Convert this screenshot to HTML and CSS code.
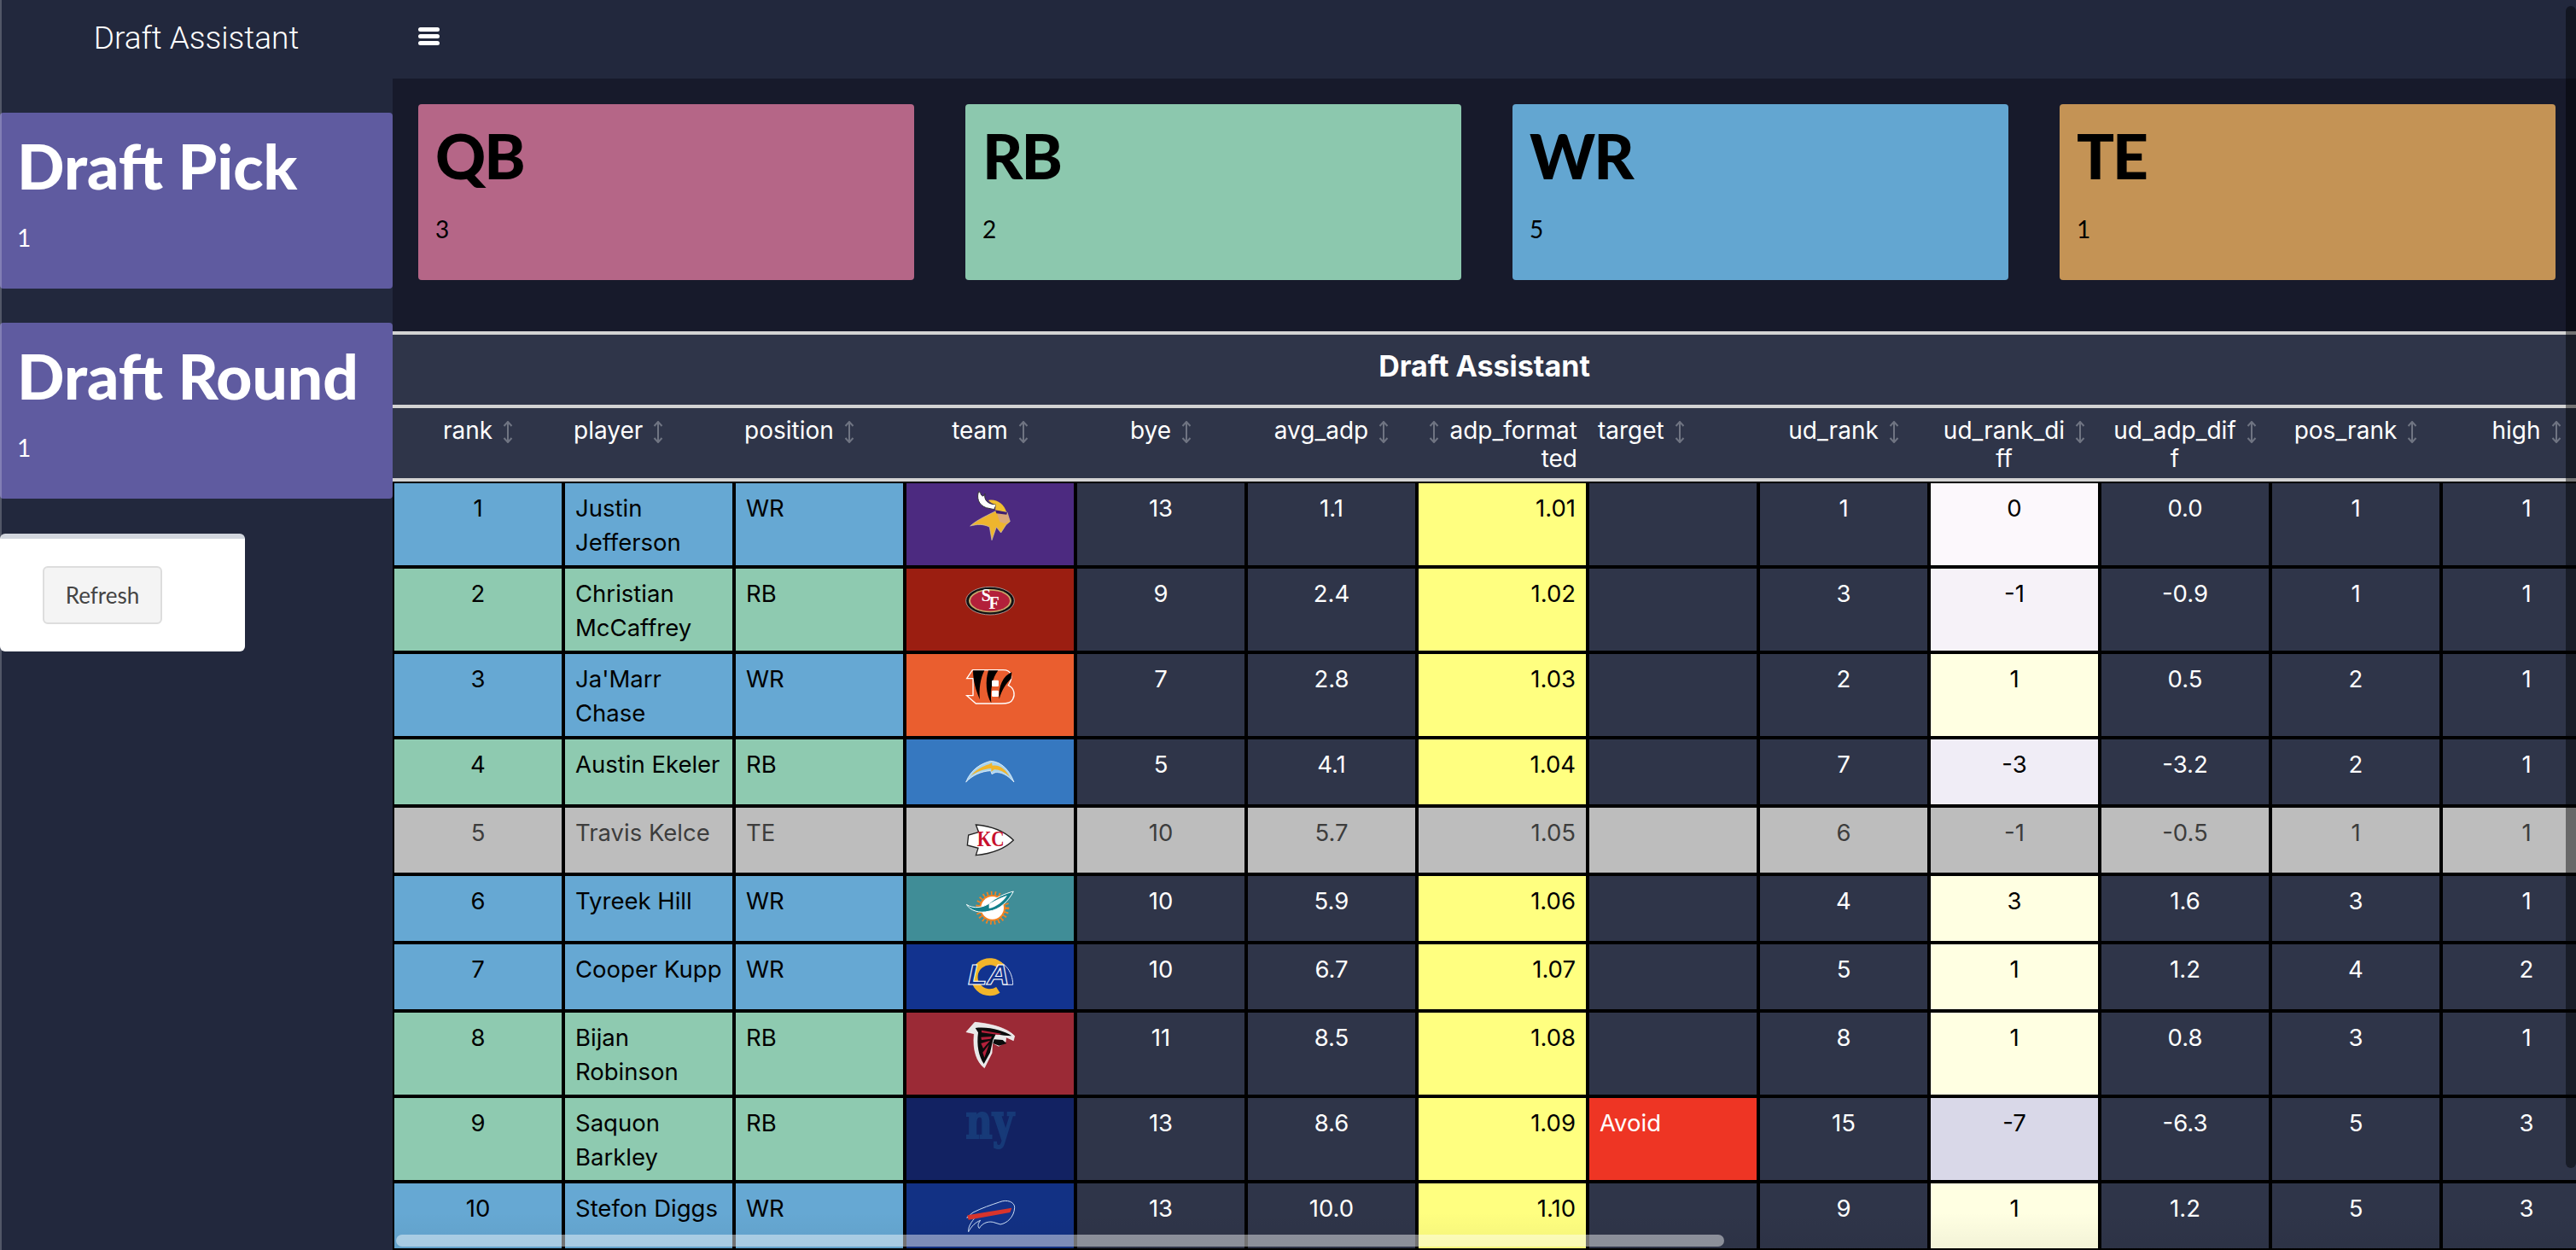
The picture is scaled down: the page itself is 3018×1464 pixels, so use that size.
FILE: index.html
```html
<!DOCTYPE html>
<html lang="en">
<head>
  <meta charset="UTF-8" />
  <title>Draft Assistant</title>
  <link rel="stylesheet" href="styles.css">
</head>
<body>
  <svg class="defs" width="0" height="0">
    <symbol id="sort" viewBox="0 0 12 26">
      <path d="M6 1V25M1.5 6L6 1L10.5 6M1.5 20L6 25L10.5 20" fill="none" stroke="#6f7482" stroke-width="2" />
    </symbol>
  </svg>

  <div class="app">
    <!-- Top bar -->
    <div class="logo">Draft Assistant</div>
    <div class="topbar">
      <div class="burger"><span></span><span></span><span></span></div>
    </div>

    <!-- Sidebar -->
    <aside class="sidebar">
      <div class="value-box pick">
        <h3>Draft Pick</h3>
        <p>1</p>
      </div>
      <div class="value-box round">
        <h3>Draft Round</h3>
        <p>1</p>
      </div>
      <div class="refresh-box">
        <button type="button">Refresh</button>
      </div>
    </aside>

    <main class="content">
      <div class="position-row">
        <div class="value-box dark qb"><h3>QB</h3><p>3</p></div>
        <div class="value-box dark rb"><h3>RB</h3><p>2</p></div>
        <div class="value-box dark wr"><h3>WR</h3><p>5</p></div>
        <div class="value-box dark te"><h3>TE</h3><p>1</p></div>
      </div>

      <div class="table-title">Draft Assistant</div>

      <table class="draft-table">
        <thead>
          <tr>
            <th><div class="th-in center"><span>rank</span><svg class="sort"><use href="#sort" /></svg></div></th>
            <th><div class="th-in"><span>player</span><svg class="sort"><use href="#sort" /></svg></div></th>
            <th><div class="th-in"><span>position</span><svg class="sort"><use href="#sort" /></svg></div></th>
            <th><div class="th-in center"><span>team</span><svg class="sort"><use href="#sort" /></svg></div></th>
            <th><div class="th-in center"><span>bye</span><svg class="sort"><use href="#sort" /></svg></div></th>
            <th><div class="th-in center"><span>avg_adp</span><svg class="sort"><use href="#sort" /></svg></div></th>
            <th><div class="th-in right"><svg class="sort"><use href="#sort" /></svg><span>adp_format<br>ted</span></div></th>
            <th><div class="th-in"><span>target</span><svg class="sort"><use href="#sort" /></svg></div></th>
            <th><div class="th-in center"><span>ud_rank</span><svg class="sort"><use href="#sort" /></svg></div></th>
            <th><div class="th-in center"><span class="mid">ud_rank_di<br>ff</span><svg class="sort"><use href="#sort" /></svg></div></th>
            <th><div class="th-in center"><span class="mid">ud_adp_dif<br>f</span><svg class="sort"><use href="#sort" /></svg></div></th>
            <th><div class="th-in center"><span>pos_rank</span><svg class="sort"><use href="#sort" /></svg></div></th>
            <th><div class="th-in center"><span>high</span><svg class="sort"><use href="#sort" /></svg></div></th>
          </tr>
        </thead>
        <tbody>
          <tr class="wr-row">
            <td class="mid pos">1</td><td class="pos name">Justin<br>Jefferson</td><td class="pos">WR</td>
            <td class="logo-cell min">
              <svg class="team-logo" viewBox="0 0 180 180">
                <path d="M50 4C42 26 48 52 76 62L104 68L112 50C88 52 66 38 72 12C68 24 60 24 56 10Z" fill="#fff" stroke="#333" stroke-width="3" />
                <path d="M84 36C110 30 138 46 148 78L108 72L110 50C100 50 90 44 84 36Z" fill="#f0bf30" />
                <path d="M20 126C50 100 84 88 112 72L150 78L160 110L146 122L128 150L112 130L96 176L88 130C66 118 44 120 20 126Z" fill="#eeb52e" stroke="#cfc7b8" stroke-width="2" />
                <path d="M112 76L150 80L158 108L142 118L124 112Z" fill="#dba878" />
                <path d="M108 70L150 78L148 86L112 82Z" fill="#3d1f6e" />
              </svg>
            </td>
            <td class="mid">13</td><td class="mid">1.1</td><td class="fmt">1.01</td><td></td><td class="mid">1</td>
            <td class="mid d-zero">0</td><td class="mid">0.0</td><td class="mid">1</td><td class="mid">1</td>
          </tr>
          <tr class="rb-row">
            <td class="mid pos">2</td><td class="pos name">Christian<br>McCaffrey</td><td class="pos">RB</td>
            <td class="logo-cell sf">
              <svg class="team-logo" viewBox="0 0 180 180">
                <ellipse cx="90" cy="89" rx="85" ry="49" fill="#111" stroke="#ccc" stroke-width="2" />
                <ellipse cx="90" cy="89" rx="75" ry="41" fill="#c9a96a" />
                <ellipse cx="90" cy="89" rx="69" ry="36" fill="#b3203a" />
                <text class="logo-serif" x="76" y="90" font-size="60" text-anchor="middle">S</text>
                <text class="logo-serif" x="104" y="118" font-size="60" text-anchor="middle">F</text>
              </svg>
            </td>
            <td class="mid">9</td><td class="mid">2.4</td><td class="fmt">1.02</td><td></td><td class="mid">3</td>
            <td class="mid d-m1">-1</td><td class="mid">-0.9</td><td class="mid">1</td><td class="mid">1</td>
          </tr>
          <tr class="wr-row">
            <td class="mid pos">3</td><td class="pos name">Ja'Marr<br>Chase</td><td class="pos">WR</td>
            <td class="logo-cell cin">
              <svg class="team-logo" viewBox="0 0 180 180">
                <path d="M28 32H136C166 32 172 58 154 86C176 96 178 120 170 134C164 148 150 150 130 150H40L8 122H30V62H8Z" fill="#ea5e2f" stroke="#fff" stroke-width="4" />
                <path d="M30 34H70C56 60 50 100 54 136C40 104 30 70 30 34Z" fill="#000" />
                <path d="M84 34H118C98 60 90 100 94 148C76 120 72 70 84 34Z" fill="#000" />
                <path d="M166 40C136 52 118 90 122 134C132 98 148 78 164 62Z" fill="#000" />
                <rect x="96" y="68" width="24" height="22" rx="4" fill="#fff" />
                <rect x="96" y="104" width="24" height="22" rx="4" fill="#fff" />
              </svg>
            </td>
            <td class="mid">7</td><td class="mid">2.8</td><td class="fmt">1.03</td><td></td><td class="mid">2</td>
            <td class="mid d-pos">1</td><td class="mid">0.5</td><td class="mid">2</td><td class="mid">1</td>
          </tr>
          <tr class="rb-row">
            <td class="mid pos">4</td><td class="pos name">Austin Ekeler</td><td class="pos">RB</td>
            <td class="logo-cell lac">
              <svg class="team-logo" viewBox="0 0 180 180">
                <path d="M5 126C22 82 58 60 92 52C132 54 160 88 174 126C150 100 128 90 108 92L96 98L92 86C58 88 28 102 5 126Z" fill="#a8d4f0" stroke="#fff" stroke-width="2" />
                <path d="M22 104C40 82 64 70 86 64L96 58L98 68C126 64 146 84 158 106C138 88 118 80 104 82L94 90V78C66 80 42 90 22 104Z" fill="#f2b52a" />
              </svg>
            </td>
            <td class="mid">5</td><td class="mid">4.1</td><td class="fmt">1.04</td><td></td><td class="mid">7</td>
            <td class="mid d-m3">-3</td><td class="mid">-3.2</td><td class="mid">2</td><td class="mid">1</td>
          </tr>
          <tr class="out-row">
            <td class="mid">5</td><td class="name">Travis Kelce</td><td>TE</td>
            <td class="logo-cell">
              <svg class="team-logo" viewBox="0 0 180 180">
                <path d="M40 36C90 40 140 58 172 90C140 122 90 138 40 143L48 118L10 108L14 72L50 62Z" fill="#fff" stroke="#222" stroke-width="4" />
                <text class="logo-kc" x="44" y="112" font-size="74" textLength="96" lengthAdjust="spacingAndGlyphs">KC</text>
              </svg>
            </td>
            <td class="mid">10</td><td class="mid">5.7</td><td class="right-text">1.05</td><td></td><td class="mid">6</td>
            <td class="mid">-1</td><td class="mid">-0.5</td><td class="mid">1</td><td class="mid">1</td>
          </tr>
          <tr class="wr-row">
            <td class="mid pos">6</td><td class="pos name">Tyreek Hill</td><td class="pos">WR</td>
            <td class="logo-cell mia">
              <svg class="team-logo" viewBox="0 0 180 180">
                <circle cx="98" cy="88" r="52" fill="none" stroke="#f58220" stroke-width="14" stroke-dasharray="5 9" />
                <circle cx="98" cy="88" r="46" fill="#f58220" />
                <circle cx="98" cy="88" r="40" fill="#fff" />
                <path d="M7 76C30 92 66 88 90 70C110 52 142 38 172 30C156 62 124 96 84 100C54 108 20 98 7 76Z" fill="#13808c" stroke="#fff" stroke-width="3" />
                <path d="M86 74C108 60 132 50 150 44C136 66 112 84 86 90Z" fill="#fff" />
              </svg>
            </td>
            <td class="mid">10</td><td class="mid">5.9</td><td class="fmt">1.06</td><td></td><td class="mid">4</td>
            <td class="mid d-pos">3</td><td class="mid">1.6</td><td class="mid">3</td><td class="mid">1</td>
          </tr>
          <tr class="wr-row">
            <td class="mid pos">7</td><td class="pos name">Cooper Kupp</td><td class="pos">WR</td>
            <td class="logo-cell lar">
              <svg class="team-logo" viewBox="0 0 180 180">
                <path d="M90 36C136 26 170 70 170 118H136" fill="none" stroke="#dfe6f5" stroke-width="3" />
                <path d="M130 56A54 54 0 1 0 118 136" fill="none" stroke="#f2b52a" stroke-width="24" />
                <text class="logo-la" x="12" y="118" font-size="98" textLength="146" lengthAdjust="spacingAndGlyphs">LA</text>
              </svg>
            </td>
            <td class="mid">10</td><td class="mid">6.7</td><td class="fmt">1.07</td><td></td><td class="mid">5</td>
            <td class="mid d-pos">1</td><td class="mid">1.2</td><td class="mid">4</td><td class="mid">2</td>
          </tr>
          <tr class="rb-row">
            <td class="mid pos">8</td><td class="pos name">Bijan<br>Robinson</td><td class="pos">RB</td>
            <td class="logo-cell atl">
              <svg class="team-logo" viewBox="0 0 180 180">
                <path d="M6 44L36 10C90 14 150 30 176 58L172 74L146 62L144 80L120 94L98 82L96 118L70 170C44 150 28 110 34 50Z" fill="#e8e8e8" stroke="#fff" stroke-width="2" />
                <path d="M38 30C86 24 140 40 166 58L140 56L110 52L100 72L90 116L68 156C50 130 42 90 48 46Z" fill="#0b0b0b" />
                <path d="M60 38L130 50L120 54L60 46ZM58 62L96 60L92 68L60 72ZM58 84L90 74L66 102ZM64 116L86 88L70 134Z" fill="#b3203a" />
                <path d="M104 70L134 72L148 84L122 92L100 84Z" fill="#0b0b0b" />
              </svg>
            </td>
            <td class="mid">11</td><td class="mid">8.5</td><td class="fmt">1.08</td><td></td><td class="mid">8</td>
            <td class="mid d-pos">1</td><td class="mid">0.8</td><td class="mid">3</td><td class="mid">1</td>
          </tr>
          <tr class="rb-row">
            <td class="mid pos">9</td><td class="pos name">Saquon<br>Barkley</td><td class="pos">RB</td>
            <td class="logo-cell nyg">
              <svg class="team-logo" viewBox="0 0 180 180">
                <text class="logo-ny" x="4" y="118" font-size="168" textLength="170" lengthAdjust="spacingAndGlyphs">ny</text>
              </svg>
            </td>
            <td class="mid">13</td><td class="mid">8.6</td><td class="fmt">1.09</td><td class="avoid">Avoid</td><td class="mid">15</td>
            <td class="mid d-m7">-7</td><td class="mid">-6.3</td><td class="mid">5</td><td class="mid">3</td>
          </tr>
          <tr class="wr-row">
            <td class="mid pos">10</td><td class="pos name">Stefon Diggs</td><td class="pos">WR</td>
            <td class="logo-cell buf">
              <svg class="team-logo" viewBox="0 0 180 180">
                <path d="M176 62C178 42 150 30 122 42C92 52 62 62 30 78L8 96L40 92C24 112 12 128 14 146C24 126 40 112 56 106C46 118 46 128 52 134C60 118 80 108 100 112L126 120C150 116 174 94 176 62Z" fill="#12328a" stroke="#cfe0f5" stroke-width="3" />
                <path d="M10 88L166 62L160 78L14 104Z" fill="#d8342c" />
              </svg>
            </td>
            <td class="mid">13</td><td class="mid">10.0</td><td class="fmt">1.10</td><td></td><td class="mid">9</td>
            <td class="mid d-pos">1</td><td class="mid">1.2</td><td class="mid">5</td><td class="mid">3</td>
          </tr>
        </tbody>
      </table>

      <!-- overlay scrollbars -->
      <div class="scroll-shade"></div>
      <div class="scroll-x"></div>
    </main>
    <div class="scroll-y"></div>
    <div class="left-edge"></div>
  </div>
</body>
</html>
```

FILE: styles.css
```css
* {
  box-sizing: border-box;
}
html, body {
  margin: 0;
  height: 100%;
  overflow: hidden;
  background: #22283d;
}
.defs {
  position: absolute;
}
.app {
  position: relative;
  display: grid;
  grid-template-columns: 460px minmax(0, 1fr);
  grid-template-rows: 92px minmax(0, 1fr);
  height: 100vh;
  font-family: Inter, "Liberation Sans", sans-serif;
}

/* top bar */
.logo {
  display: flex;
  align-items: center;
  justify-content: center;
  padding-bottom: 4px;
  color: #fff;
  font-family: Roboto, sans-serif;
  font-weight: 300;
  font-size: 37px;
}
.topbar {
  display: flex;
  align-items: center;
  padding-left: 30px;
  padding-bottom: 8px;
}
.burger {
  display: flex;
  flex-direction: column;
  gap: 3px;
  width: 25px;
}
.burger span {
  height: 5px;
  border-radius: 3px;
  background: #fff;
}

/* sidebar */
.sidebar {
  padding-top: 40px;
}
.value-box {
  padding: 20px;
  border-radius: 4px;
  color: #fff;
  background: #5f5ba0;
  font-family: Lato, sans-serif;
}
.value-box h3 {
  margin: 0;
  font-size: 73px;
  line-height: 84px;
  font-weight: 900;
}
.value-box p {
  margin: 22px 0 0;
  font-size: 28px;
  line-height: 40px;
}
.sidebar .value-box {
  height: 206px;
  margin-bottom: 40px;
}
.sidebar .round {
  margin-bottom: 41px;
}
.refresh-box {
  width: 287px;
  height: 138px;
  padding: 32px 50px;
  border-top: 6px solid #d2d6de;
  border-radius: 6px;
  background: #fff;
}
.refresh-box button {
  display: block;
  width: 140px;
  height: 68px;
  padding: 0;
  border: 2px solid #ddd;
  border-radius: 6px;
  background: #f4f4f4;
  color: #444;
  font-family: Lato, sans-serif;
  font-size: 26px;
}

/* main area */
.content {
  position: relative;
  overflow: hidden;
  background: #171a2b;
}
.position-row {
  display: grid;
  grid-template-columns: repeat(4, 581px);
  gap: 60px;
  padding: 30px;
  margin-bottom: 30px;
}
.position-row .value-box {
  height: 206px;
  color: #000;
}
.position-row .value-box h3 {
  margin-top: 8px;
  line-height: 64px;
  letter-spacing: -2px;
}
.position-row .value-box p {
  margin-top: 34px;
}
.qb { background: #b56687; }
.rb { background: #8cc8ae; }
.wr { background: #63a6d1; }
.te { background: #c49355; }

.table-title {
  height: 90px;
  padding-bottom: 10px;
  display: flex;
  align-items: center;
  justify-content: center;
  border-top: 4px solid #d3d3d3;
  border-bottom: 4px solid #d3d3d3;
  background: #2f3549;
  color: #fff;
  font-size: 34px;
  font-weight: 700;
}

/* table */
.draft-table {
  table-layout: fixed;
  width: 2600px;
  border-collapse: separate;
  border-spacing: 0;
  font-size: 27.5px;
  line-height: 40px;
  color: #fff;
}
.draft-table th {
  height: 86px;
  padding: 10px 12px 6px;
  vertical-align: top;
  background: #2f3549;
  border-bottom: 4px solid #d3d3d3;
  font-size: 28px;
  font-weight: 400;
  line-height: 33px;
}
.th-in {
  display: flex;
  gap: 12px;
  text-align: left;
}
.th-in.center {
  justify-content: center;
}
.th-in.right {
  justify-content: flex-end;
  text-align: right;
}
.th-in .mid {
  text-align: center;
}
.th-in span {
  white-space: nowrap;
}
.sort {
  flex: none;
  width: 12px;
  height: 26px;
  margin-top: 5px;
}
.draft-table td {
  padding: 9px 12px 7px;
  vertical-align: top;
  background: #2f3549;
  border: 2px solid #000;
}
.draft-table td.name {
  white-space: nowrap;
}
.draft-table td.mid {
  text-align: center;
}
.draft-table td.pos {
  color: #000;
}
.wr-row td.pos { background: #66a8d3; }
.rb-row td.pos { background: #8ecab0; }
.draft-table td.fmt {
  background: #ffff80;
  color: #000;
  text-align: right;
}
.draft-table td.avoid {
  background: #ee3524;
}
.draft-table td.d-zero { background: #fcf8fc; color: #000; }
.draft-table td.d-m1 { background: #f6f2f8; color: #000; }
.draft-table td.d-m3 { background: #f0edf6; color: #000; }
.draft-table td.d-m7 { background: #d9d8e8; color: #000; }
.draft-table td.d-pos { background: #ffffe2; color: #000; }

.draft-table .out-row td {
  background: #bdbdbd;
  color: #3d3d3d;
}
.draft-table td.right-text {
  text-align: right;
}

/* team logos */
.draft-table td.logo-cell {
  padding: 8px 0;
  text-align: center;
}
.team-logo {
  display: block;
  width: 60px;
  height: 60px;
  margin: 0 auto;
  overflow: visible;
}
.draft-table td.min { background: #4c2a80; }
.draft-table td.sf { background: #9b1e11; }
.draft-table td.cin { background: #ea5e2f; }
.draft-table td.lac { background: #3678c0; }
.draft-table td.mia { background: #408d97; }
.draft-table td.lar { background: #12338f; }
.draft-table td.atl { background: #9b2a36; }
.draft-table td.nyg { background: #122262; }
.draft-table td.buf { background: #123184; }
.logo-serif {
  font-family: "Liberation Serif", serif;
  font-weight: 700;
  fill: #fff;
}
.logo-kc {
  font-family: "Liberation Serif", serif;
  font-weight: 700;
  fill: #c8102e;
}
.logo-la {
  font-family: "Liberation Sans", sans-serif;
  font-style: italic;
  font-weight: 700;
  fill: #12338f;
  stroke: #fff;
  stroke-width: 3px;
}
.logo-ny {
  font-family: "DejaVu Serif", serif;
  font-weight: 700;
  fill: #173a78;
  stroke: #173a78;
  stroke-width: 6px;
}

/* overlay scrollbars and window edge */
.scroll-shade {
  position: absolute;
  left: 0;
  right: 0;
  bottom: 0;
  height: 44px;
  background: linear-gradient(rgba(0, 0, 0, 0), rgba(0, 0, 0, 0.05));
}
.scroll-x {
  position: absolute;
  left: 4px;
  bottom: 4px;
  width: 1556px;
  height: 14px;
  border-radius: 7px;
  background: rgba(255, 255, 255, 0.45);
}
.scroll-y {
  position: absolute;
  top: 7px;
  right: 0;
  width: 12px;
  height: 1361px;
  border-radius: 6px;
  background: rgba(0, 0, 0, 0.45);
}
.left-edge {
  position: absolute;
  top: 0;
  bottom: 0;
  left: 0;
  width: 2px;
  background: rgba(255, 255, 255, 0.22);
}
```
